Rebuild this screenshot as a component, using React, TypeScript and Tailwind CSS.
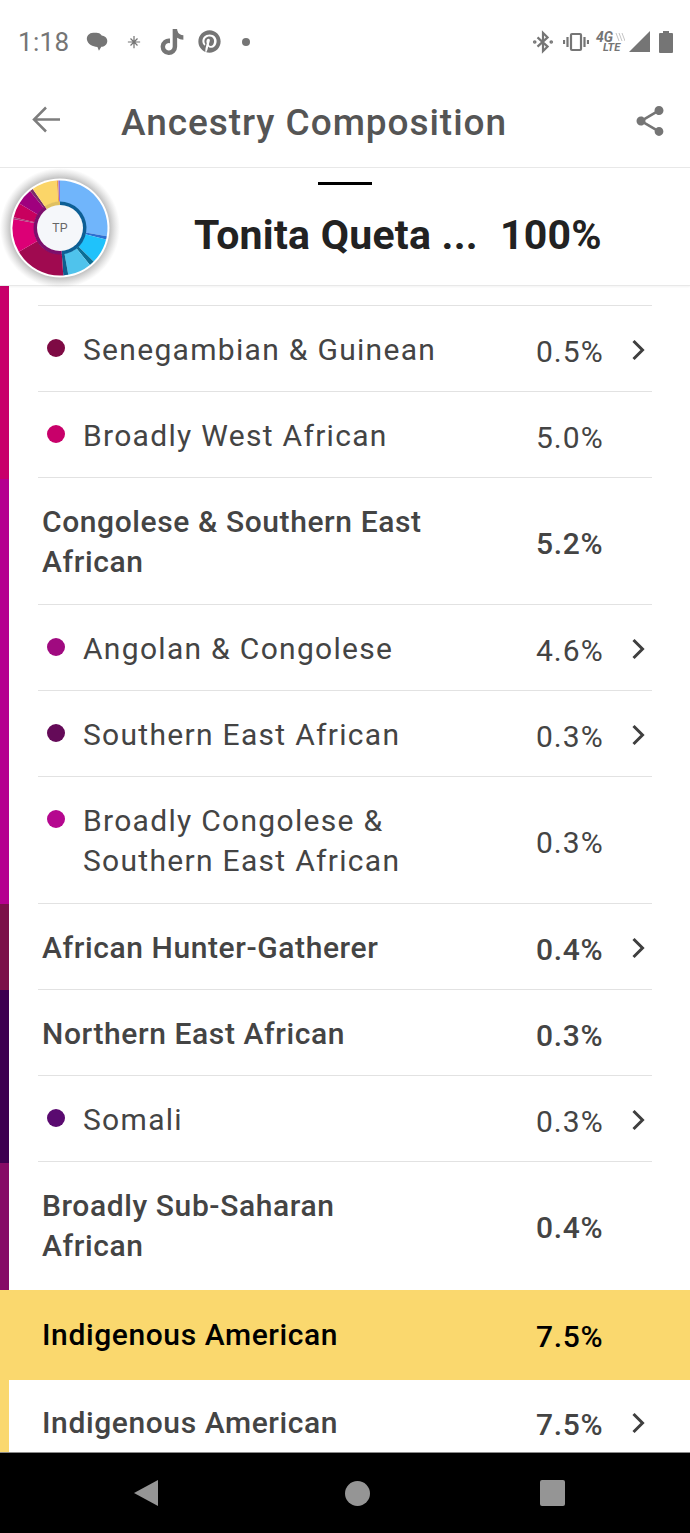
import { FaPinterest, FaTiktok } from "react-icons/fa";

type Row = {
  label: string[];
  pct: string;
  dot?: string;
  chevron?: boolean;
};

const rows: Row[] = [
  { label: ["Senegambian & Guinean"], pct: "0.5%", dot: "bg-[#7e0a44]", chevron: true },
  { label: ["Broadly West African"], pct: "5.0%", dot: "bg-[#c8006a]" },
  { label: ["Congolese & Southern East", "African"], pct: "5.2%" },
  { label: ["Angolan & Congolese"], pct: "4.6%", dot: "bg-[#a00a80]", chevron: true },
  { label: ["Southern East African"], pct: "0.3%", dot: "bg-[#640a58]", chevron: true },
  { label: ["Broadly Congolese &", "Southern East African"], pct: "0.3%", dot: "bg-[#b5078f]" },
  { label: ["African Hunter-Gatherer"], pct: "0.4%", chevron: true },
  { label: ["Northern East African"], pct: "0.3%" },
  { label: ["Somali"], pct: "0.3%", dot: "bg-[#5a0a70]", chevron: true },
  { label: ["Broadly Sub-Saharan", "African"], pct: "0.4%" },
];

function Chevron() {
  return (
    <svg viewBox="0 0 14 22" className="h-[22px] w-[14px] text-[#3f3f3f]" fill="none" stroke="currentColor" strokeWidth="3">
      <path d="M2.500 2l9 9-9 9" />
    </svg>
  );
}

function ListRow({ row, last }: { row: Row; last: boolean }) {
  const isChild = !!row.dot;
  return (
    <div className={`ml-[29px] mr-[38px] flex items-center border-b pt-[24px] ${row.label.length > 1 ? "pb-[22px]" : "pb-[21px]"} ${last ? "border-transparent" : "border-[#e2e2e2]"}`}>
      <div className={`relative flex-1 text-[30px] leading-[40px] ${isChild ? "pl-[45px] font-normal tracking-[1.3px] text-[#444]" : "pl-[4px] font-medium tracking-[0.6px] text-[#444]"}`}>
        {row.dot && <span className={`absolute left-[9px] top-[9px] h-[18px] w-[18px] rounded-full ${row.dot}`} />}
        {row.label.map((line) => (
          <div key={line}>{line}</div>
        ))}
      </div>
      <div className={`h-[40px] w-[92px] pt-[2px] text-[30px] leading-[40px] text-[#444] ${isChild ? "tracking-[1px]" : "font-medium tracking-[0.7px]"}`}>{row.pct}</div>
      <div className="flex h-[24px] w-[24px] items-center justify-center pr-[4px]">{row.chevron && <Chevron />}</div>
    </div>
  );
}

function Donut() {
  const c = 60;
  const seg = (a0: number, a1: number, r0: number, r1: number, fill: string) => {
    const p = (a: number, r: number) => {
      const t = ((a - 90) * Math.PI) / 180;
      return `${c + r * Math.cos(t)} ${c + r * Math.sin(t)}`;
    };
    const large = a1 - a0 > 180 ? 1 : 0;
    return <path key={`${a0}-${r0}`} fill={fill} d={`M${p(a0, r1)} A${r1} ${r1} 0 ${large} 1 ${p(a1, r1)} L${p(a1, r0)} A${r0} ${r0} 0 ${large} 0 ${p(a0, r0)} Z`} />;
  };
  return (
    <svg viewBox="0 0 120 120" className="h-[120px] w-[120px]">
      <defs>
        <radialGradient id="halo">
          <stop offset="78%" stopColor="#666" stopOpacity="0.55" />
          <stop offset="100%" stopColor="#999" stopOpacity="0" />
        </radialGradient>
      </defs>
      <circle cx={c} cy={c} r={60} fill="url(#halo)" />
      <circle cx={c} cy={c} r={49.5} fill="#fff" />
      {seg(0, 100, 26, 47.5, "#70b5fb")}
      {seg(100, 104, 26, 47.5, "#2f6fd0")}
      {seg(104, 135, 26, 47.5, "#1fc2fb")}
      {seg(135, 141, 26, 47.5, "#0d6f95")}
      {seg(141, 170, 26, 47.5, "#4fc3ec")}
      {seg(170, 176, 26, 47.5, "#0d5f90")}
      {seg(176, 240, 26, 47.5, "#a00a50")}
      {seg(240, 281, 26, 47.5, "#dc0076")}
      {seg(281, 283, 26, 47.5, "#a83a78")}
      {seg(283, 301, 26, 47.5, "#c8005e")}
      {seg(301, 321, 26, 47.5, "#a0007e")}
      {seg(321, 325, 26, 47.5, "#7a2a6a")}
      {seg(325, 356, 26, 47.5, "#fbd568")}
      {seg(356, 358, 26, 47.5, "#f0a040")}
      {seg(358, 360, 26, 47.5, "#8f6fe0")}
      {seg(0, 176, 22, 26.5, "#0d5f95")}
      {seg(176, 325, 22, 26.5, "#7d0f6c")}
      {seg(325, 360, 22, 26.5, "#e0c060")}
      <circle cx={c} cy={c} r={23} fill="#f5f7fa" />
      <text x={c} y={c + 4} textAnchor="middle" fontSize="12" fill="#666" fontFamily="Liberation Sans, sans-serif">
        TP
      </text>
    </svg>
  );
}

function StatusBar() {
  return (
    <div className="flex h-[84px] items-center justify-between pb-[1px] pl-[18px] pr-[17px]">
      <div className="flex items-center text-[#757575]">
        <span className="text-[26px] leading-none tracking-[0.3px]">1:18</span>
        <svg viewBox="0 0 24 24" className="ml-[15px] h-[26px] w-[26px]" fill="currentColor">
          <path d="M5 4.500c2-1.300 8-1.300 10 0 .6.4 1 .9 1.300 1.500 2.300.3 5.200 1.800 5.200 5 0 3.500-3 5.200-5.500 5.400l-2.200 3.600-1.400-3.400C8 16.500 3.500 14 2.700 10c-.4-2.400.5-4.300 2.300-5.500z" />
        </svg>
        <svg viewBox="0 0 16 16" className="ml-[17px] h-[14px] w-[14px]" fill="none" stroke="currentColor" strokeWidth="1.400">
          <path d="M8 1v14M1 8h14M4 4l8 8M12 4l-8 8" />
        </svg>
        <FaTiktok className="ml-[19px] h-[26px] w-[24px]" />
        <FaPinterest className="ml-[14px] h-[23px] w-[23px]" />
        <span className="ml-[21px] h-[8px] w-[8px] rounded-full bg-[#757575]" />
      </div>
      <div className="flex items-center text-[#757575]">
        <svg viewBox="0 0 24 24" className="h-[24px] w-[22px]" fill="none" stroke="currentColor" strokeWidth="2.400">
          <path d="M6 7l11 10-5 5V2l5 5L6 17" />
          <circle cx="3" cy="12" r="0.8" />
          <circle cx="21" cy="12" r="0.8" />
        </svg>
        <svg viewBox="0 0 26 20" className="ml-[9px] h-[20px] w-[26px]" fill="none" stroke="currentColor" strokeWidth="2.200">
          <rect x="8" y="2" width="10" height="16" rx="1" />
          <path d="M4.500 5v10M21.500 5v10M1 8v4M25 8v4" />
        </svg>
        <div className="relative ml-[7px] h-[22px] w-[29px]">
          <span className="absolute left-0 top-0 text-[14px] font-bold italic leading-[13px]">4G</span>
          <span className="absolute left-[7px] top-[12px] text-[11px] font-bold italic leading-[10px]">LTE</span>
          <svg viewBox="0 0 10 10" className="absolute right-0 top-0 h-[12px] w-[10px] text-[#c4c4c4]" fill="none" stroke="currentColor" strokeWidth="1">
            <path d="M1 1l3 8M4 1l3 8M7 1l3 8" />
          </svg>
        </div>
        <svg viewBox="0 0 21 21" className="ml-[4px] h-[21px] w-[21px]" fill="currentColor">
          <path d="M21 0v21H0z" />
        </svg>
        <svg viewBox="0 0 14 22" className="ml-[9px] h-[22px] w-[14px]" fill="currentColor">
          <path d="M4 0h6v2h3a1 1 0 0 1 1 1v18a1 1 0 0 1-1 1H1a1 1 0 0 1-1-1V3a1 1 0 0 1 1-1h3z" />
        </svg>
      </div>
    </div>
  );
}

export default function App() {
  return (
    <div className="relative flex h-[1533px] w-[690px] flex-col overflow-hidden bg-white font-['Roboto',sans-serif]">
      <StatusBar />
      <div className="flex h-[84px] items-center border-b border-[#e8e8e8] pb-[7px] pl-[32px] pr-[22px]">
        <svg viewBox="0 0 28 27" className="mb-[5px] h-[27px] w-[28px] text-[#7d7d7d]" fill="none" stroke="currentColor" strokeWidth="2.500">
          <path d="M28 13.500H3M14 1.500L2 13.500l12 12" />
        </svg>
        <div className="ml-[61px] flex-1 text-[37px] font-medium leading-none tracking-[0.95px] text-[#555]">Ancestry Composition</div>
        <svg viewBox="0 0 24 24" className="mb-[2px] h-[36px] w-[36px] text-[#757575]" fill="currentColor">
          <path d="M18 16.080c-.760 0-1.440.300-1.960.770L8.910 12.700c.050-.230.090-.460.090-.700s-.040-.470-.090-.700l7.050-4.110c.540.500 1.250.810 2.040.810 1.660 0 3-1.340 3-3s-1.340-3-3-3-3 1.340-3 3c0 .240.040.470.090.700L8.040 9.810C7.500 9.310 6.790 9 6 9c-1.660 0-3 1.340-3 3s1.340 3 3 3c.790 0 1.500-.310 2.040-.810l7.120 4.160c-.050.210-.080.430-.080.650 0 1.610 1.310 2.920 2.920 2.920s2.920-1.310 2.920-2.920-1.310-2.920-2.920-2.920z" />
        </svg>
      </div>

      <div className="relative flex h-[118px] items-center border-b border-[#e8e8e8] pt-[17px] shadow-[0_1px_2px_rgba(0,0,0,0.05)]">
        <span className="absolute left-[318px] top-[14px] h-[3px] w-[54px] bg-black" />
        <div className="absolute left-0 top-0">
          <Donut />
        </div>
        <div className="ml-[194px] w-[306px] text-[41px] font-bold leading-none tracking-[0.25px] text-[#222]">Tonita Queta ...</div>
        <div className="text-[41px] font-bold leading-none tracking-[0.2px] text-[#222]">100%</div>
      </div>

      <div className="flex min-h-0 flex-1">
        <div className="flex w-[9px] shrink-0 flex-col">
          <div className="h-[193px] bg-[#c8006a]" />
          <div className="h-[425px] bg-[#b5008f]" />
          <div className="h-[86px] bg-[#7b1048]" />
          <div className="h-[173px] bg-[#3d0050]" />
          <div className="h-[127px] bg-[#860b66]" />
          <div className="flex-1 bg-[#fad86e]" />
        </div>
        <div className="min-w-0 flex-1 overflow-hidden">
          <div className="ml-[29px] mr-[38px] h-[20px] border-b border-[#e2e2e2]" />
          {rows.map((row, i) => (
            <ListRow key={row.label.join(" ")} row={row} last={i === rows.length - 1} />
          ))}
          <div className="mt-[1px] flex h-[90px] items-center bg-[#fad86e] pl-[33px] pr-[38px] text-black">
            <div className="flex-1 text-[30px] font-medium leading-[40px] tracking-[0.6px]">Indigenous American</div>
            <div className="h-[40px] w-[116px] pt-[2px] text-[30px] font-medium leading-[40px] tracking-[0.7px]">7.5%</div>
          </div>
          <div className="ml-[29px] mr-[38px] flex items-center pt-[23px]">
            <div className="flex-1 pl-[4px] text-[30px] font-medium leading-[40px] tracking-[0.6px] text-[#444]">Indigenous American</div>
            <div className="h-[40px] w-[92px] pt-[2px] text-[30px] font-medium leading-[40px] tracking-[0.7px] text-[#444]">7.5%</div>
            <div className="flex h-[24px] w-[24px] items-center justify-center pr-[4px]">
              <Chevron />
            </div>
          </div>
        </div>
      </div>

      <div className="flex h-[81px] shrink-0 items-center border-t border-[#8a8a8a] bg-black">
        <div className="ml-[134px] h-0 w-0 border-y-[13px] border-r-[24px] border-y-transparent border-r-[#959595]" />
        <div className="ml-[187px] h-[25px] w-[25px] rounded-full bg-[#959595]" />
        <div className="ml-[170px] h-[26px] w-[25px] rounded-[2px] bg-[#959595]" />
      </div>
    </div>
  );
}
